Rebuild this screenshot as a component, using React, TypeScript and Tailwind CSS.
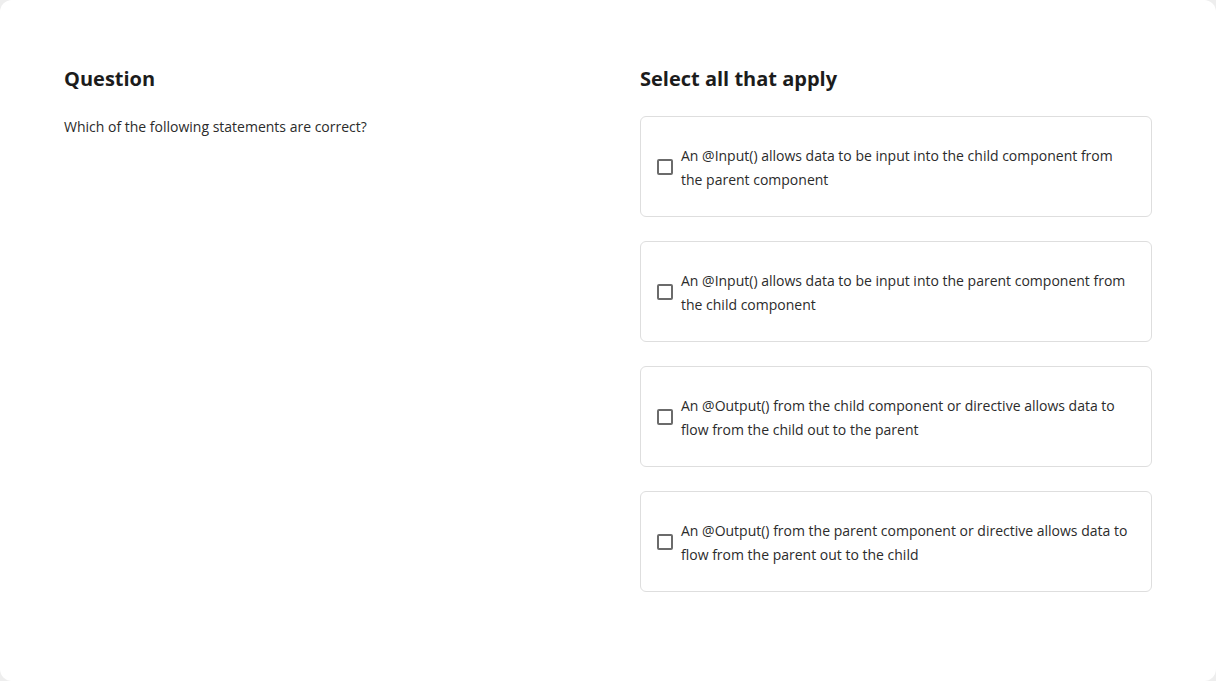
const options = [
  "An @Input() allows data to be input into the child component from the parent component",
  "An @Input() allows data to be input into the parent component from the child component",
  "An @Output() from the child component or directive allows data to flow from the child out to the parent",
  "An @Output() from the parent component or directive allows data to flow from the parent out to the child",
];

const App = () => {
  return (
    <div className="min-h-screen bg-[#eeeeee] font-['Open_Sans',sans-serif]">
      <div className="min-h-[681px] rounded-xl bg-white px-16 pt-[65px] pb-16">
        <div className="grid grid-cols-2 gap-16">
          <div>
            <h2 className="mb-[23px] text-xl font-bold leading-7 text-[#1c1c1c]">Question</h2>
            <p className="-mt-px text-sm leading-6 text-[#2b2b2b]">Which of the following statements are correct?</p>
          </div>
          <div>
            <h2 className="mb-[23px] text-xl font-bold leading-7 text-[#1c1c1c]">Select all that apply</h2>
            <div className="flex flex-col gap-6">
              {options.map((opt) => (
                <label
                  key={opt}
                  className="flex items-center gap-2 rounded-md border border-[#dedede] bg-white pt-[27px] pb-6 pl-4 pr-4"
                >
                  <span className="mb-[2px] size-4 shrink-0 rounded-[2px] border-2 border-[#6b6b6b]" />
                  <span className="text-sm leading-6 text-[#2b2b2b]">{opt}</span>
                </label>
              ))}
            </div>
          </div>
        </div>
      </div>
    </div>
  );
};

export default App;
